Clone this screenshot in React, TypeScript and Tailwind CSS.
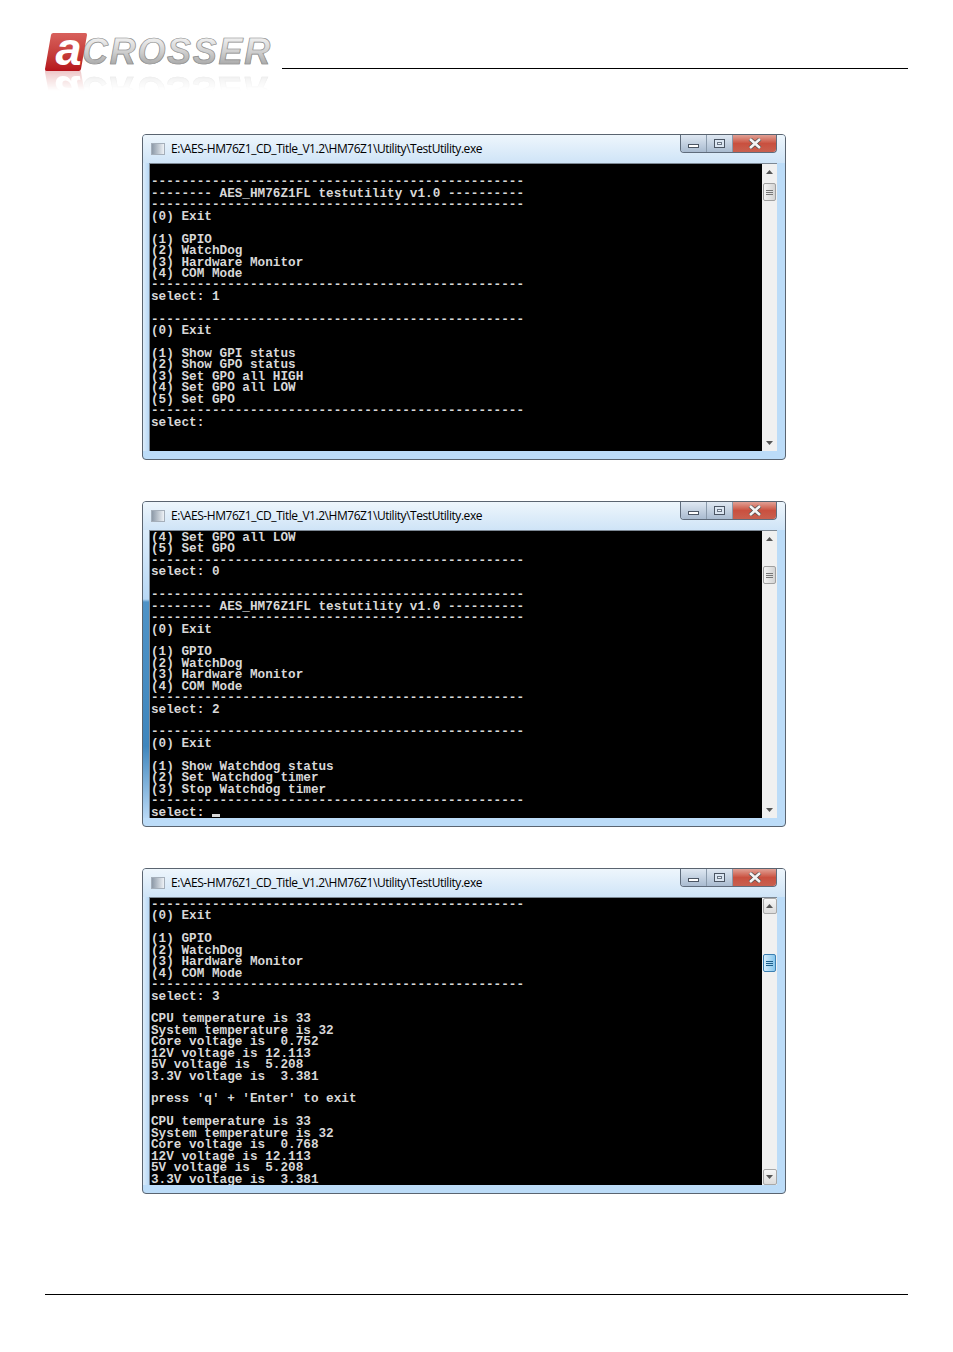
import React from "react";

const D = "-".repeat(49);
const T = "-------- AES_HM76Z1FL testutility v1.0 ----------";
const MENU = ["(1) GPIO", "(2) WatchDog", "(3) Hardware Monitor", "(4) COM Mode"];

const w1 = ["", D, T, D, "(0) Exit", "", ...MENU, D, "select: 1", "", D, "(0) Exit", "", "(1) Show GPI status", "(2) Show GPO status", "(3) Set GPO all HIGH", "(4) Set GPO all LOW", "(5) Set GPO", D, "select:", "", ""];
const w2 = ["(4) Set GPO all LOW", "(5) Set GPO", D, "select: 0", "", D, T, D, "(0) Exit", "", ...MENU, D, "select: 2", "", D, "(0) Exit", "", "(1) Show Watchdog status", "(2) Set Watchdog timer", "(3) Stop Watchdog timer", D, "select:"];
const w3 = [D, "(0) Exit", "", ...MENU, D, "select: 3", "", "CPU temperature is 33", "System temperature is 32", "Core voltage is  0.752", "12V voltage is 12.113", "5V voltage is  5.208", "3.3V voltage is  3.381", "", "press 'q' + 'Enter' to exit", "", "CPU temperature is 33", "System temperature is 32", "Core voltage is  0.768", "12V voltage is 12.113", "5V voltage is  5.208", "3.3V voltage is  3.381"];

function Mark() {
  return (
    <div className="flex items-end h-[38px]">
      <div className="relative w-[36px] h-[38px] -skew-x-[10deg] ml-[3px] shrink-0 bg-gradient-to-b from-[#d8605c] to-[#b5121b] rounded-[2px] flex items-center justify-center overflow-visible">
        <span className="skew-x-[10deg] italic text-white font-['Liberation_Sans',sans-serif] font-bold text-[47px] leading-[30px] translate-x-[2px] -translate-y-[3px]">a</span>
      </div>
      <span className="ml-[-2px] mb-[4px] pr-1 whitespace-nowrap bg-gradient-to-b from-[#f2f2f2] via-[#cfcfcf] to-[#a2a2a2] bg-clip-text text-transparent font-['Liberation_Sans',sans-serif] font-bold italic text-[36px] leading-[30px] tracking-[1.7px] [-webkit-text-stroke:0.7px_#8f8f8f]">CROSSER</span>
    </div>
  );
}

function Logo() {
  return (
    <div className="relative w-[228px] h-[38px]">
      <Mark />
      <div className="absolute left-0 top-[37px] h-[21px] w-[240px] -scale-y-100 flex flex-col justify-end overflow-hidden opacity-25 [mask-image:linear-gradient(to_top,black,transparent)]">
        <div className="shrink-0">
          <Mark />
        </div>
      </div>
    </div>
  );
}

function WinButtons() {
  return (
    <div className="flex h-[18px] w-[97px] border border-t-0 border-[#5f6c7c] rounded-b-[4px] overflow-hidden">
      <div className="w-[26px] bg-gradient-to-b from-[#dfe8f2] to-[#a9bbd0] border-r border-[#8a9aab] flex items-center justify-center">
        <div className="w-[11px] h-[4px] mt-[5px] bg-white border border-[#4b5563]" />
      </div>
      <div className="w-[26px] bg-gradient-to-b from-[#dfe8f2] to-[#a9bbd0] border-r border-[#8a9aab] flex items-center justify-center">
        <div className="w-[11px] h-[9px] bg-[#dbe6f2] border border-[#4b5563] flex items-center justify-center">
          <div className="w-[5px] h-[3px] bg-[#eef3f8] border border-[#6b7685]" />
        </div>
      </div>
      <div className="flex-1 bg-gradient-to-b from-[#e0a095] via-[#c9503f] to-[#c8604f] flex items-center justify-center">
        <svg width="14" height="11" viewBox="0 0 14 11">
          <path d="M2 1 L12 10 M12 1 L2 10" stroke="#4b4b4b" strokeWidth="4" />
          <path d="M2 1 L12 10 M12 1 L2 10" stroke="#f4f4f4" strokeWidth="2.6" />
        </svg>
      </div>
    </div>
  );
}

function Arrow({ down }: { down?: boolean }) {
  return (
    <svg width="7" height="4" viewBox="0 0 7 4">
      <path d={down ? "M0 0 H7 L3.5 4 Z" : "M3.5 0 L7 4 H0 Z"} fill="#555" />
    </svg>
  );
}

function Scrollbar({ thumb, active, framed }: { thumb: string; active?: boolean; framed?: boolean }) {
  const btn = framed ? "border border-[#a8a8a8] bg-gradient-to-b from-[#f6f6f6] to-[#dcdcdc] rounded-[2px]" : "";
  const bar = active ? "bg-[#1d5f8a]" : "bg-[#777]";
  return (
    <div className="w-[15px] h-full bg-[#f0f0f0] flex flex-col items-center">
      <div className={`w-[14px] h-[16px] shrink-0 flex items-center justify-center ${btn}`}>
        <Arrow />
      </div>
      <div className={`${thumb} w-[13px] h-[18px] shrink-0 rounded-[2px] border flex flex-col items-center justify-center gap-[1px] ${active ? "border-[#3c7fb1] bg-gradient-to-r from-[#d4ecfb] to-[#86c6ec]" : "border-[#a0a0a0] bg-gradient-to-r from-[#f4f4f4] to-[#d4d4d4]"}`}>
        <div className={`w-[7px] h-px ${bar}`} />
        <div className={`w-[7px] h-px ${bar}`} />
        <div className={`w-[7px] h-px ${bar}`} />
      </div>
      <div className="flex-1" />
      <div className={`w-[14px] h-[16px] shrink-0 flex items-center justify-center ${btn}`}>
        <Arrow down />
      </div>
    </div>
  );
}

function ConsoleWindow({ lines, thumb, rail, active, framed, cursor }: { lines: string[]; thumb: string; rail: string; active?: boolean; framed?: boolean; cursor?: boolean }) {
  return (
    <div className="w-[644px] h-[326px] flex flex-col rounded-[4px] border border-[#5a6470] bg-[#bcdcf8] overflow-hidden">
      <div className="h-[28px] shrink-0 flex justify-between bg-gradient-to-b from-[#eef6fc] to-[#cfe4f7]">
        <div className="flex items-center pl-[8px]">
          <div className="w-[14px] h-[12px] bg-gradient-to-r from-[#8d9aa8] to-[#eef2f6] border border-[#a5afba]" />
          <span className="ml-[6px] font-['Open_Sans',sans-serif] text-[12px] leading-[14px] tracking-[-0.45px] text-black whitespace-nowrap">E:\AES-HM76Z1_CD_Title_V1.2\HM76Z1\Utility\TestUtility.exe</span>
        </div>
        <div className="pr-[8px]">
          <WinButtons />
        </div>
      </div>
      <div className="flex-1 min-h-0 flex pr-[8px]">
        <div className={`w-[6px] h-[288px] shrink-0 ${rail}`} />
        <div className="flex-1 h-[288px] flex border border-b-0 border-r-0 border-[#7d8894]">
          <pre className="flex-1 h-[287px] pt-[1px] pl-[1px] bg-black text-[#d8d8d8] overflow-hidden font-['Liberation_Mono',monospace] font-bold text-[12.7px] leading-[11.44px] m-0 whitespace-pre">
            {lines.join("\n")}
            {cursor ? <span className="inline-block w-[8px] h-[3px] ml-[8px] bg-[#d8d8d8] translate-y-[1px]" /> : null}
          </pre>
          <Scrollbar thumb={thumb} active={active} framed={framed} />
        </div>
      </div>
    </div>
  );
}

export default function App() {
  return (
    <div className="w-[953px] h-[1352px] bg-white flex flex-col">
      <header className="h-[69px] pt-[33px] flex items-start">
        <div className="ml-[45px]">
          <Logo />
        </div>
        <div className="ml-[9px] mt-[35px] w-[626px] h-px bg-black" />
      </header>
      <main className="pt-[65px] pl-[142px] flex flex-col gap-[41px]">
        <ConsoleWindow lines={w1} thumb="mt-[3px]" rail="bg-gradient-to-r from-[#dcecfa] to-[#b8d8f5]" />
        <ConsoleWindow lines={w2} thumb="mt-[19px]" rail="bg-[linear-gradient(to_bottom,#dcecfa_0%,#b8d8f5_24%,#4f93c7_25%,#3f86bd_75%,#b8d8f5_100%)]" cursor />
        <ConsoleWindow lines={w3} thumb="mt-[40px]" rail="bg-gradient-to-r from-[#dcecfa] to-[#b8d8f5]" active framed />
      </main>
      <footer className="mt-[100px] ml-[45px] w-[863px] h-px bg-black" />
    </div>
  );
}
